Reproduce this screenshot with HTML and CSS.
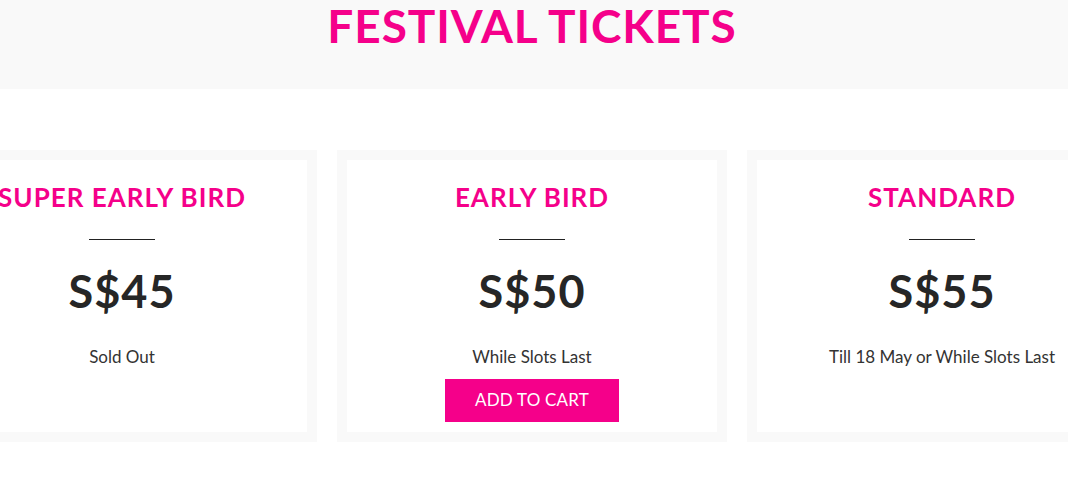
FILE: index.html
```html
<!DOCTYPE html>
<html lang="en">
<head>
<meta charset="utf-8">
<title>Festival Tickets</title>
<link rel="stylesheet" href="styles.css">
</head>
<body>
<header class="hero">
  <h1 class="hero-title">FESTIVAL TICKETS</h1>
</header>
<main class="tickets">
  <div class="ticket-row">
    <section class="ticket">
      <h2 class="ticket-name">SUPER EARLY BIRD</h2>
      <hr class="ticket-rule">
      <p class="ticket-price">S$45</p>
      <p class="ticket-note">Sold Out</p>
    </section>
    <section class="ticket">
      <h2 class="ticket-name">EARLY BIRD</h2>
      <hr class="ticket-rule">
      <p class="ticket-price">S$50</p>
      <p class="ticket-note">While Slots Last</p>
      <a class="ticket-btn" href="#">ADD TO CART</a>
    </section>
    <section class="ticket">
      <h2 class="ticket-name">STANDARD</h2>
      <hr class="ticket-rule">
      <p class="ticket-price">S$55</p>
      <p class="ticket-note">Till 18 May or While Slots Last</p>
    </section>
  </div>
</main>
</body>
</html>
```
FILE: styles.css
```css
html, body {
  margin: 0;
  padding: 0;
  overflow: hidden;
  background: #ffffff;
}
body {
  font-family: Lato, "Noto Sans", sans-serif;
  width: 1068px;
  height: 480px;
}
.hero {
  height: 89px;
  background: #f9f9f9;
  padding: 4px 4px 0 0;
  box-sizing: border-box;
}
.hero-title {
  margin: 0;
  text-align: center;
  font-size: 46px;
  line-height: 44px;
  font-weight: 700;
  color: #f5008a;
  letter-spacing: 0.9px;
}
.tickets {
  padding-top: 61px;
}
.ticket-row {
  display: flex;
  gap: 20px;
  width: 1210px;
  margin-left: -73px;
}
.ticket {
  flex: 0 0 390px;
  height: 292px;
  box-sizing: border-box;
  border: 10px solid #f9f9f9;
  background: #ffffff;
  display: flex;
  flex-direction: column;
  align-items: center;
  padding-top: 24px;
}
.ticket-name {
  margin: 0;
  font-size: 26px;
  line-height: 26px;
  font-weight: 700;
  color: #f5008a;
  letter-spacing: 1px;
}
.ticket-rule {
  margin: 29px 0 0;
  width: 66px;
  height: 1px;
  border: 0;
  background: #222222;
}
.ticket-price {
  margin: 29px 0 0;
  font-size: 45px;
  line-height: 45px;
  font-weight: 700;
  color: #262626;
  letter-spacing: 1px;
}
.ticket-note {
  margin: 34px 0 0;
  font-size: 17px;
  line-height: 17px;
  font-weight: 400;
  color: #333333;
}
.ticket-btn {
  margin-top: 14px;
  width: 174px;
  height: 43px;
  box-sizing: border-box;
  padding-bottom: 2px;
  line-height: 41px;
  text-align: center;
  background: #f5008a;
  color: #ffffff;
  font-size: 17px;
  letter-spacing: 0.2px;
  text-decoration: none;
}
```
